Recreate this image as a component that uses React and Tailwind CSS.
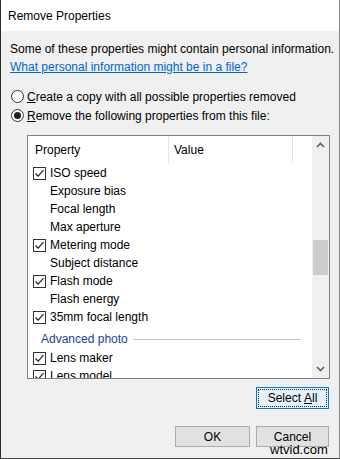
import React from "react";

const font = { fontFamily: '"Segoe UI", "Liberation Sans", Arial, sans-serif' };

function Check() {
  return (
    <span className="w-[13px] h-[13px] border border-[#333333] bg-white flex items-center justify-center shrink-0">
      <svg width="11" height="11" viewBox="0 0 11 11">
        <path d="M1.5 5.5 L4.2 8.2 L9.5 2.2" fill="none" stroke="#222" strokeWidth="1.2" />
      </svg>
    </span>
  );
}

function Radio({ on }) {
  return (
    <span className="w-[13px] h-[13px] rounded-full border border-[#333333] bg-white flex items-center justify-center shrink-0">
      {on && <span className="w-[7px] h-[7px] rounded-full bg-[#222222]" />}
    </span>
  );
}

const rows = [
  { t: "ISO speed", c: true },
  { t: "Exposure bias", c: false },
  { t: "Focal length", c: false },
  { t: "Max aperture", c: false },
  { t: "Metering mode", c: true },
  { t: "Subject distance", c: false },
  { t: "Flash mode", c: true },
  { t: "Flash energy", c: false },
  { t: "35mm focal length", c: true },
];

function Row({ t, c }) {
  return (
    <div className="h-[18px] flex items-center pl-[5px] shrink-0">
      {c ? <Check /> : <span className="w-[13px] shrink-0" />}
      <span className="ml-[4px] text-[12px] text-black leading-none">{t}</span>
    </div>
  );
}

export default function App() {
  return (
    <div
      className="relative w-[340px] h-[459px] bg-[#f0f0f0] border-l border-l-[#2b2b2b] border-r border-r-[#888888] border-b border-b-[#444444] flex flex-col text-[12px] text-black overflow-hidden"
      style={font}
    >
      <div className="h-[31px] bg-white flex items-center pl-[7px] text-[12px] shrink-0">Remove Properties</div>
      <div className="pl-[9px] pt-[9px] leading-[18px] shrink-0">
        <div>Some of these properties might contain personal information.</div>
        <div className="text-[#0066cc] underline">What personal information might be in a file?</div>
      </div>
      <div className="pl-[10px] mt-[11px] flex flex-col shrink-0">
        <div className="h-[19px] flex items-center gap-[3px]">
          <Radio />
          <span><span className="underline">C</span>reate a copy with all possible properties removed</span>
        </div>
        <div className="h-[19px] flex items-center gap-[3px]">
          <Radio on />
          <span><span className="underline">R</span>emove the following properties from this file:</span>
        </div>
      </div>
      <div className="ml-[26px] mt-[10px] w-[303px] h-[244px] border border-[#828282] bg-white flex shrink-0">
        <div className="flex-1 flex flex-col overflow-hidden">
          <div className="h-[27px] flex shrink-0">
            <div className="w-[141px] border-r border-r-[#e5e5e5] flex items-center pl-[7px]">Property</div>
            <div className="w-[124px] border-r border-r-[#e5e5e5] flex items-center pl-[5px]">Value</div>
          </div>
          <div className="flex flex-col overflow-hidden pt-[1px]">
            {rows.map((r) => (
              <Row key={r.t} {...r} />
            ))}
            <div className="h-[23px] flex items-center pl-[13px] pt-[3px] shrink-0">
              <span className="text-[#1e3c9a] text-[12px] leading-none">Advanced photo</span>
              <span className="ml-[5px] flex-1 mr-[12px] h-px bg-[#b9c3d1]" />
            </div>
            <Row t="Lens maker" c />
            <Row t="Lens model" c />
          </div>
        </div>
        <div className="w-[17px] bg-[#f0f0f0] flex flex-col items-center shrink-0">
          <div className="h-[18px] flex items-center justify-center">
            <svg width="9" height="6" viewBox="0 0 9 6">
              <path d="M1 5 L4.5 1.5 L8 5" fill="none" stroke="#606060" strokeWidth="1.6" />
            </svg>
          </div>
          <div className="h-[86px]" />
          <div className="w-[15px] h-[35px] bg-[#cdcdcd]" />
          <div className="flex-1" />
          <div className="h-[18px] flex items-center justify-center">
            <svg width="9" height="6" viewBox="0 0 9 6">
              <path d="M1 1 L4.5 4.5 L8 1" fill="none" stroke="#606060" strokeWidth="1.6" />
            </svg>
          </div>
        </div>
      </div>
      <div className="flex justify-end pr-[10px] mt-[8px] shrink-0">
        <button className="w-[73px] h-[22px] border border-[#0078d7] bg-[#e5f1fb] p-[1px]">
          <span className="w-full h-full border border-dotted border-[#222] flex items-center justify-center">
            Select <span className="underline ml-[3px]">A</span>ll
          </span>
        </button>
      </div>
      <div className="flex justify-end gap-[6px] pr-[10px] mt-[17px] shrink-0">
        <button className="w-[75px] h-[21px] border border-[#adadad] bg-[#e1e1e1] flex items-center justify-center">OK</button>
        <button className="w-[73px] h-[21px] border border-[#adadad] bg-[#e1e1e1] flex items-center justify-center">Cancel</button>
      </div>
      <div className="absolute left-[269px] top-[443px] text-[13px] leading-[13px] text-black">wtvid.com</div>
    </div>
  );
}
